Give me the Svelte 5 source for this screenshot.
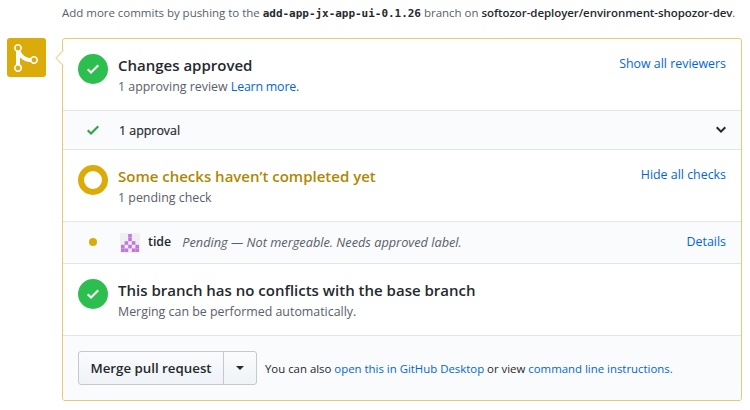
<script>
  const mergeable = 'This branch has no conflicts with the base branch';
  const cells = [
    [2, 0], [2, 1],
    [1, 2], [3, 2],
    [0, 3], [2, 3], [4, 3],
    [0, 4], [1, 4], [3, 4], [4, 4]
  ];
</script>

{#snippet check()}
  <svg width="12" height="16" viewBox="0 0 12 16">
    <path fill="currentColor" fill-rule="evenodd" d="M12 5l-8 8-4-4 1.5-1.5L4 10l6.5-6.5L12 5z" />
  </svg>
{/snippet}

<main>
  <p class="push">
    Add more commits by pushing to the
    <code>add-app-jx-app-ui-0.1.26</code>
    branch on
    <strong>softozor-deployer/environment-shopozor-dev</strong>.
  </p>
  <div class="merge">
    <div class="badge">
      <svg width="24" height="32" viewBox="0 0 12 16"><path fill="#fff" fill-rule="evenodd" d="M10 7c-.73 0-1.38.41-1.73 1.02V8C7.22 7.98 6 7.64 5.14 6.98c-.75-.58-1.5-1.61-1.89-2.44A1.993 1.993 0 0 0 2 .99C.89.99 0 1.89 0 3a2 2 0 0 0 1 1.72v6.56c-.59.35-1 .99-1 1.72 0 1.11.89 2 2 2a1.993 1.993 0 0 0 1-3.72V7.67c.67.7 1.44 1.27 2.3 1.69.86.42 2.03.63 2.97.64v-.02c.36.61 1 1.02 1.73 1.02 1.11 0 2-.89 2-2 0-1.11-.89-2-2-2zm-6.8 6c0 .66-.55 1.2-1.2 1.2-.65 0-1.2-.55-1.2-1.2 0-.65.55-1.2 1.2-1.2.65 0 1.2.55 1.2 1.2zM2 4.2C1.34 4.2.8 3.65.8 3c0-.65.55-1.2 1.2-1.2.65 0 1.2.55 1.2 1.2 0 .65-.55 1.2-1.2 1.2zm8 6c-.66 0-1.2-.55-1.2-1.2 0-.65.55-1.2 1.2-1.2.65 0 1.2.55 1.2 1.2 0 .65-.55 1.2-1.2 1.2z" /></svg>
    </div>
    <div class="box">
      <svg class="pointer" width="9" height="18" viewBox="0 0 9 18"><path d="M8.5 1L1 9l7.500 8" fill="#fff" stroke="#eadca6" stroke-width="1.200" /></svg>
      <section class="item">
        <div class="circle">{@render check()}</div>
        <div class="body"><h3>Changes approved</h3><p>1 approving review <a class="learn" href="#top">Learn more.</a></p></div>
        <a class="side" href="#top">Show all reviewers</a>
      </section>
      <section class="row approval">
        <div class="mark green">{@render check()}</div>
        <span class="name">1 approval</span>
        <svg width="10" height="16" viewBox="0 0 10 16"><path fill="#24292e" d="M5 11L0 6l1.500-1.500L5 8.250 8.500 4.500 10 6l-5 5z" /></svg>
      </section>
      <section class="item">
        <div class="ring"></div>
        <div class="body"><h3 class="pending">Some checks haven’t completed yet</h3><p>1 pending check</p></div>
        <a class="side" href="#top">Hide all checks</a>
      </section>
      <section class="row status">
        <div class="mark"><i class="dot"></i></div>
        <svg class="avatar" width="20" height="20" viewBox="0 0 20 20">
          <rect width="20" height="20" rx="2" fill="#efeff0" />
          {#each cells as [x, y]}<rect x={1 + x * 3.6} y={1 + y * 3.6} width="3.6" height="3.6" fill="#c277df" />{/each}
        </svg>
        <strong class="context">tide</strong>
        <em>Pending — Not mergeable. Needs approved label.</em>
        <a class="details" href="#top">Details</a>
      </section>
      <section class="item">
        <div class="circle">{@render check()}</div>
        <div class="body"><h3>{mergeable}</h3><p>Merging can be performed automatically.</p></div>
      </section>
      <section class="actions">
        <div class="group"><button class="btn">Merge pull request</button><button class="drop" aria-label="Select merge method"><i></i></button></div>
        <p class="also">You can also <a href="#top">open this in GitHub Desktop</a> or view <a href="#top">command line instructions.</a></p>
      </section>
    </div>
  </div>
</main>

<style>
  :global(body) { background: #fff; }
  main { width: 750px; height: 410px; box-sizing: border-box; padding-left: 7px; overflow: hidden; font: 12.4px/20px "Open Sans", "Noto Sans", sans-serif; color: #24292e; }
  p, h3 { margin: 0; white-space: nowrap; }
  a { color: #0366d6; text-decoration: none; }
  .push { height: 38px; padding-left: 55px; box-sizing: border-box; padding-top: 3px; font-size: 11.5px; letter-spacing: -0.02px; color: #586069; }
  .push strong { font-weight: 600; letter-spacing: -0.07px; color: #24292e; }
  code { font: bold 11px "DejaVu Sans Mono", monospace; color: #24292e; letter-spacing: -0.03px; }
  .merge { display: flex; align-items: flex-start; gap: 16px; }
  .badge { width: 39px; height: 39px; border-radius: 3px; background: #dbab09; display: flex; align-items: center; justify-content: center; }
  .badge svg { margin-right: 2px; }
  .box { position: relative; width: 680px; height: 363px; box-sizing: border-box; border: 1px solid #e2cb74; border-radius: 3px; display: flex; flex-direction: column; }
  .pointer { position: absolute; left: -8px; top: 10px; }
  .item { height: 71px; display: flex; padding: 15px 15px 0; box-sizing: border-box; }
  .circle, .ring { width: 30px; height: 30px; box-sizing: border-box; border-radius: 50%; flex: none; }
  .circle { background: #2cbe4e; color: #fff; display: flex; align-items: center; justify-content: center; }
  .ring { border: 6px solid #dbab09; }
  .body { margin-left: 10px; flex: 1; }
  h3 { font-size: 15px; line-height: 22px; font-weight: 600; }
  .body p { line-height: 22px; color: #586069; }
  .learn { letter-spacing: -0.2px; }
  .pending { color: #b08800; }
  .side { line-height: 20px; }
  .row { display: flex; align-items: center; background: #fafbfc; border: solid #e1e4e8; border-width: 1px 0; box-sizing: border-box; padding: 0 15px; }
  .approval { height: 40px; }
  .status { height: 43px; }
  .mark { width: 30px; display: flex; justify-content: center; }
  .green { color: #28a745; }
  .name { margin-left: 11px; flex: 1; padding-top: 2px; -webkit-text-stroke: 0.2px #24292e; }
  .dot { width: 8px; height: 8px; border-radius: 50%; background: #dbab09; margin-bottom: 2px; }
  .avatar { margin-left: 12px; }
  .context, em, .details { padding-bottom: 1px; }
  .context { font-weight: 600; margin-left: 8px; }
  em { margin-left: 11px; flex: 1; color: #586069; font-size: 12.75px; white-space: nowrap; }
  .actions { flex: 1; border-top: 1px solid #e1e4e8; background: #fafbfc; display: flex; align-items: center; padding-left: 15px; border-radius: 0 0 2px 2px; }
  .group { display: flex; width: 179px; height: 34px; box-sizing: border-box; border: 1px solid #c5c9cd; border-radius: 3px; background: linear-gradient(#fafbfc, #eff3f6); }
  button { border: 0; padding: 0; background: none; color: #24292e; font: 600 13.3px "Open Sans", sans-serif; white-space: nowrap; }
  .btn { width: 144px; }
  .drop { flex: 1; border-left: 1px solid #c5c9cd; display: flex; align-items: center; justify-content: center; }
  .drop i { border: 4px solid transparent; border-top-color: #24292e; border-bottom: 0; }
  .also { margin-left: 8px; padding-top: 1px; font-size: 11.4px; }
</style>
